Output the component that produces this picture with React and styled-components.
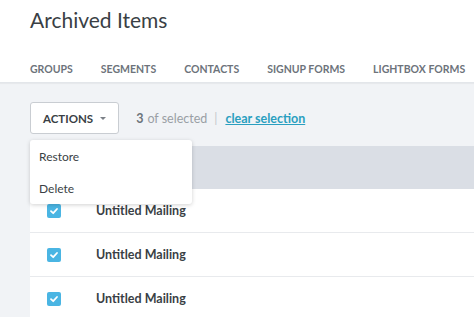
import React from 'react';
import styled, {createGlobalStyle} from 'styled-components';

const GlobalStyle = createGlobalStyle`
    body {
        margin: 0;
        font-family: Lato, "Open Sans", sans-serif;
        background: #f1f3f6;
        overflow: hidden;
    }
`;

const Page = styled.div`
    width: 474px;
    height: 317px;
    overflow: hidden;
`;

const Header = styled.header`
    background: #ffffff;
    padding: 7px 0 0 30px;
    border-bottom: 1px solid #e3e6ea;
    box-shadow: 0 1px 1px rgba(0, 0, 0, 0.04);
`;

const Title = styled.h1`
    margin: 0;
    font-size: 21px;
    font-weight: 400;
    color: #3a3f45;
    line-height: 26px;
`;

const Tabs = styled.nav`
    display: flex;
    gap: 28px;
    margin-top: 29px;
    height: 20px;
    white-space: nowrap;
`;

const Tab = styled.div`
    font-size: 10.5px;
    font-weight: 700;
    color: #6d737b;
    line-height: 14px;
`;

const Content = styled.main`
    position: relative;
    padding: 19px 0 0 30px;
`;

const Toolbar = styled.div`
    display: flex;
    align-items: center;
    gap: 17px;
    height: 32px;
`;

const ActionsButton = styled.button`
    display: flex;
    align-items: center;
    gap: 7px;
    height: 32px;
    padding: 0 12px;
    background: #ffffff;
    border: 1px solid #c9cdd2;
    border-radius: 3px;
    font-family: inherit;
    font-size: 11.5px;
    font-weight: 700;
    color: #3a3f45;
`;

const Caret = styled.span`
    width: 0;
    height: 0;
    border-left: 3px solid transparent;
    border-right: 3px solid transparent;
    border-top: 3px solid #7b8087;
`;

const Selection = styled.div`
    font-size: 12.5px;
    color: #9a9fa5;
    display: flex;
    align-items: center;
    gap: 4px;
`;

const Count = styled.b`
    color: #6d737b;
    font-weight: 700;
`;

const Divider = styled.span`
    margin: 0 4px 0 3px;
    color: #c4c8cd;
`;

const ClearLink = styled.a`
    color: #2a9fc0;
    font-weight: 700;
    text-decoration: underline;
    cursor: pointer;
`;

const Menu = styled.div`
    position: absolute;
    left: 30px;
    top: 57px;
    width: 162px;
    background: #ffffff;
    border-radius: 3px;
    box-shadow: 0 1px 4px rgba(0, 0, 0, 0.18);
    z-index: 2;
`;

const MenuItem = styled.div`
    padding: 0 9px;
    height: 32px;
    display: flex;
    align-items: center;
    font-size: 12px;
    color: #3a3f45;
`;

const Table = styled.div`
    margin-top: 12px;
    background: #ffffff;
`;

const HeadRow = styled.div`
    height: 43px;
    background: #dadee5;
`;

const Row = styled.div`
    display: flex;
    align-items: center;
    height: 43px;
    padding-left: 17px;
    border-top: ${p => (p.first ? 'none' : '1px solid #e8eaed')};
`;

const Check = styled.span`
    width: 14px;
    height: 14px;
    border-radius: 2px;
    background: #4ab5e3;
    display: flex;
    align-items: center;
    justify-content: center;
`;

const Name = styled.span`
    margin-left: 35px;
    font-size: 12.5px;
    font-weight: 700;
    color: #3a3f45;
`;

const tabs = ['Groups', 'Segments', 'Contacts', 'Signup Forms', 'Lightbox Forms'];

const App = () => (
    <Page>
        <GlobalStyle />
        <Header>
            <Title>Archived Items</Title>
            <Tabs>
                {tabs.map(t => (
                    <Tab key={t}>{t.toUpperCase()}</Tab>
                ))}
            </Tabs>
        </Header>
        <Content>
            <Toolbar>
                <ActionsButton>
                    ACTIONS <Caret />
                </ActionsButton>
                <Selection>
                    <Count>3</Count> of selected <Divider>|</Divider>
                    <ClearLink>clear selection</ClearLink>
                </Selection>
            </Toolbar>
            <Menu>
                <MenuItem>Restore</MenuItem>
                <MenuItem>Delete</MenuItem>
            </Menu>
            <Table>
                <HeadRow />
                {[0, 1, 2].map(i => (
                    <Row key={i} first={i === 0}>
                        <Check>
                            <svg width="10" height="10" viewBox="0 0 10 10">
                                <path d="M2 5.2 L4.2 7.2 L8 3" fill="none" stroke="#fff" strokeWidth="1.8" strokeLinecap="round" strokeLinejoin="round" />
                            </svg>
                        </Check>
                        <Name>Untitled Mailing</Name>
                    </Row>
                ))}
            </Table>
        </Content>
    </Page>
);

export default App;
